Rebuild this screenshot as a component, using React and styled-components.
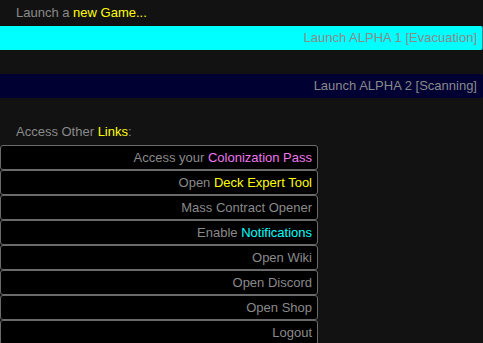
import React from 'react'
import styled, { createGlobalStyle } from 'styled-components'

const GlobalStyle = createGlobalStyle`
    html, body {
        margin: 0;
        padding: 0;
        background: #121212;
    }
    body {
        font-family: 'Liberation Sans', Arial, sans-serif;
        font-size: 13px;
        color: #8a8a8a;
    }
`

const games = [
    { label: 'Launch ALPHA 1 [Evacuation]', bg: '#00ffff', edge: '#2a8f8f' },
    { label: 'Launch ALPHA 2 [Scanning]', bg: '#000033', edge: '#000033' },
]

const links = [
    { pre: 'Access your ', hl: 'Colonization Pass', color: '#ee77ee' },
    { pre: 'Open ', hl: 'Deck Expert Tool', color: '#ffff00' },
    { pre: 'Mass Contract Opener' },
    { pre: 'Enable ', hl: 'Notifications', color: '#00ffff' },
    { pre: 'Open Wiki' },
    { pre: 'Open Discord' },
    { pre: 'Open Shop' },
    { pre: 'Logout' },
]

const App = () => {
    return (
        <>
            <GlobalStyle />
            <Page>
                <Heading>
                    Launch a <Hl color="#ffff00">new Game...</Hl>
                </Heading>

                <GameList>
                    {games.map((g) => (
                        <GameBar key={g.label} bg={g.bg} edge={g.edge}>
                            {g.label}
                        </GameBar>
                    ))}
                </GameList>

                <Heading top={21}>
                    Access Other <Hl color="#ffff00">Links</Hl>:
                </Heading>

                <LinkList>
                    {links.map((l) => (
                        <LinkRow key={l.pre + (l.hl || '')}>
                            {l.pre}
                            {l.hl && <Hl color={l.color}>{l.hl}</Hl>}
                        </LinkRow>
                    ))}
                </LinkList>
            </Page>
        </>
    )
}

const Page = styled.div`
    width: 483px;
    height: 343px;
    overflow: hidden;
    display: flex;
    flex-direction: column;
`

const Heading = styled.div`
    flex-shrink: 0;
    height: 26px;
    line-height: 26px;
    padding-left: 16px;
    margin-top: ${(p) => p.top || 0}px;
    color: #8a8a8a;
`

const Hl = styled.span`
    color: ${(p) => p.color};
`

const GameList = styled.div`
    display: flex;
    flex-direction: column;
    gap: 24px;
    flex-shrink: 0;
`

const GameBar = styled.div`
    height: 24px;
    line-height: 24px;
    padding-right: 5px;
    text-align: right;
    background: ${(p) => p.bg};
    border-right: 1px solid ${(p) => p.edge};
    border-radius: 0 2px 2px 0;
    color: #8a8a8a;
`

const LinkList = styled.div`
    width: 318px;
    display: flex;
    flex-direction: column;
    flex-shrink: 0;
`

const LinkRow = styled.div`
    flex-shrink: 0;
    height: 23px;
    line-height: 23px;
    padding-right: 5px;
    text-align: right;
    background: #000;
    border: 1px solid #6a6a6a;
    border-radius: 3px;
    color: #8a8a8a;
    white-space: nowrap;
`

export default App
